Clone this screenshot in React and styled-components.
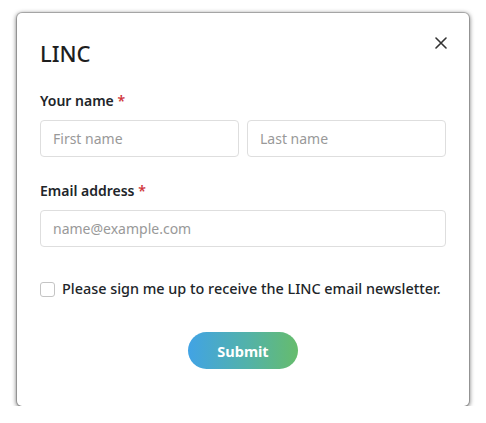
import { useState } from "react";
import styled, { createGlobalStyle } from "styled-components";

const GlobalStyle = createGlobalStyle`
  body {
    margin: 0;
    background: #ffffff;
    font-family: "Noto Sans", "Open Sans", Arial, sans-serif;
    color: #212529;
  }
  * { box-sizing: border-box; }
`;

export default function App() {
  const [form, setForm] = useState({ first: "", last: "", email: "", newsletter: false });

  const handleChange = (e) => {
    const { name, type, value, checked } = e.target;
    setForm({ ...form, [name]: type === "checkbox" ? checked : value });
  };

  return (
    <>
      <GlobalStyle />
      <Page>
        <Modal>
          <CloseButton type="button" aria-label="Close">
            <svg width="12" height="12" viewBox="0 0 12 12" fill="none">
              <path d="M1 1L11 11M11 1L1 11" stroke="#333" strokeWidth="1.6" strokeLinecap="round" />
            </svg>
          </CloseButton>
          <Title>LINC</Title>
          <Form onSubmit={(e) => e.preventDefault()}>
            <Label>
              Your name <Required>*</Required>
            </Label>
            <NameRow>
              <Input name="first" value={form.first} onChange={handleChange} placeholder="First name" />
              <Input name="last" value={form.last} onChange={handleChange} placeholder="Last name" />
            </NameRow>
            <Label $top={24}>
              Email address <Required>*</Required>
            </Label>
            <Input
              type="email"
              name="email"
              value={form.email}
              onChange={handleChange}
              placeholder="name@example.com"
            />
            <CheckRow>
              <CheckBox
                type="checkbox"
                name="newsletter"
                checked={form.newsletter}
                onChange={handleChange}
              />
              Please sign me up to receive the LINC email newsletter.
            </CheckRow>
            <Actions>
              <SubmitButton type="submit">Submit</SubmitButton>
            </Actions>
          </Form>
        </Modal>
      </Page>
    </>
  );
}

const Page = styled.div`
  padding: 13px 0 0 17px;
`;

const Modal = styled.div`
  position: relative;
  width: 452px;
  height: 393px;
  background: #fff;
  border-radius: 5px;
  box-shadow: 0 0 0 1px rgba(0, 0, 0, 0.18), 0 1px 4px 1px rgba(0, 0, 0, 0.5);
  padding: 26px 23px 37px;
`;

const CloseButton = styled.button`
  position: absolute;
  top: 24px;
  right: 22px;
  width: 12px;
  height: 12px;
  padding: 0;
  border: none;
  background: none;
  display: flex;
  cursor: pointer;
`;

const Title = styled.h1`
  margin: 0;
  font-size: 22px;
  line-height: 28px;
  font-weight: 500;
  color: #1e1e1e;
`;

const Form = styled.form`
  display: flex;
  flex-direction: column;
`;

const Label = styled.label`
  margin-top: ${(p) => p.$top ?? 24}px;
  margin-bottom: 9px;
  font-size: 14px;
  line-height: 20px;
  font-weight: 600;
  color: #212529;
`;

const Required = styled.span`
  color: #d0363b;
`;

const NameRow = styled.div`
  display: grid;
  grid-template-columns: 1fr 1fr;
  gap: 8px;
`;

const Input = styled.input`
  width: 100%;
  height: 37px;
  padding: 0 12px;
  border: 1px solid #dedede;
  border-radius: 4px;
  font-family: inherit;
  font-size: 14px;
  color: #333;
  &::placeholder {
    color: #999;
  }
  &:focus {
    outline: none;
    border-color: #86b7fe;
  }
`;

const CheckRow = styled.label`
  margin-top: 32px;
  display: flex;
  align-items: center;
  gap: 7px;
  font-size: 14.4px;
  line-height: 20px;
  font-weight: 500;
  white-space: nowrap;
  color: #212529;
`;

const CheckBox = styled.input`
  appearance: none;
  margin: 0;
  width: 15px;
  height: 15px;
  border: 1px solid #c4c4c4;
  border-radius: 3px;
  background: #fff;
  flex-shrink: 0;
  &:checked {
    background: #42a5e6;
    border-color: #42a5e6;
  }
`;

const Actions = styled.div`
  margin-top: 33px;
  display: flex;
  justify-content: center;
`;

const SubmitButton = styled.button`
  width: 110px;
  height: 37px;
  border: none;
  border-radius: 19px;
  background: linear-gradient(90deg, #41a3e5 0%, #53b2a8 55%, #66bc6c 100%);
  color: #fff;
  font-family: inherit;
  font-size: 14.5px;
  font-weight: 700;
  cursor: pointer;
`;
